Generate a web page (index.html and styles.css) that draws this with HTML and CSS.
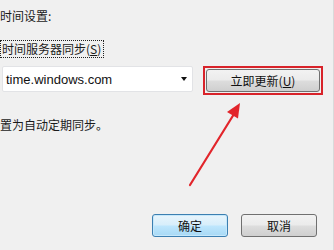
FILE: index.html
```html
<!DOCTYPE html>
<html lang="zh-CN">
<head>
    <meta charset="UTF-8">
    <title>时间设置</title>
    <link rel="stylesheet" href="styles.css">
</head>
<body>
    <div class="page">
        <div class="title">时间设置:</div>
        <div class="sync">时间服务器同步(<u>S</u>)</div>
        <div class="server-row">
            <div class="combo">
                <span class="combo-text">time.windows.com</span>
                <span class="combo-arrow"></span>
            </div>
            <div class="highlight">
                <button class="button update">立即更新(<u>U</u>)</button>
            </div>
        </div>
        <div class="note">置为自动定期同步。</div>
        <div class="footer">
            <button class="button ok">确定</button>
            <button class="button cancel">取消</button>
        </div>
        <svg class="arrow" width="334" height="250" viewBox="0 0 334 250">
            <line x1="190" y1="185" x2="234" y2="114" stroke="#e2252b" stroke-width="2.2" stroke-linecap="round"/>
            <polygon points="240,103 238,118.5 227,112" fill="#e2252b"/>
        </svg>
    </div>
</body>
</html>
```

FILE: styles.css
```css
body {
    margin: 0;
    background-color: #f0f0f0;
}
.page {
    position: relative;
    display: flex;
    flex-direction: column;
    width: 333px;
    height: 250px;
    border-right: 1px solid #dadada;
    overflow: hidden;
    font-family: "Noto Sans CJK SC", sans-serif;
    font-size: 12px;
    color: #1b1b1b;
}
u {
    text-decoration: underline;
    text-underline-offset: 1px;
}
.title {
    margin: 8px 0 0 0;
    line-height: 16px;
}
.sync {
    align-self: flex-start;
    margin-top: 16px;
    padding: 0 2px 0 1px;
    border: 1px dotted #222;
    line-height: 16px;
}
.server-row {
    display: flex;
    align-items: flex-start;
    gap: 10px;
    margin: 8px 0 0 2px;
}
.combo {
    display: flex;
    align-items: center;
    justify-content: space-between;
    box-sizing: border-box;
    width: 191px;
    height: 26px;
    padding: 0 5px 0 3px;
    background: #fff;
    border: 1px solid #e2e3e6;
    border-radius: 2px;
}
.combo-text {
    font-family: "Liberation Sans", Arial, sans-serif;
    font-size: 13px;
    color: #111;
}
.combo-arrow {
    width: 0;
    height: 0;
    border-left: 3.5px solid transparent;
    border-right: 3.5px solid transparent;
    border-top: 4px solid #111;
}
.highlight {
    padding: 1px;
    border: 2px solid #d8232a;
}
.button {
    box-sizing: border-box;
    font-family: "Noto Sans CJK SC", sans-serif;
    font-size: 12px;
    color: #111;
    border: 1px solid #707070;
    border-radius: 3px;
    background: linear-gradient(#f2f2f2, #ebebeb 48%, #dddddd 52%, #cfcfcf);
    padding: 0;
    cursor: pointer;
}
.update {
    display: block;
    width: 114px;
    height: 23px;
}
.note {
    margin: 22px 0 0 0;
    line-height: 16px;
}
.footer {
    display: flex;
    justify-content: flex-end;
    gap: 13px;
    margin-top: auto;
    padding: 0 16px 13px 0;
}
.footer .button {
    width: 76px;
    height: 23px;
}
.ok {
    border-color: #3c7fb1;
    background: linear-gradient(#e9f5fc, #d7eefb 48%, #bee6fd 52%, #a7d9f5);
    box-shadow: inset 0 0 0 1px #c6e8fb;
}
.arrow {
    position: absolute;
    left: 0;
    top: 0;
    pointer-events: none;
}
```
